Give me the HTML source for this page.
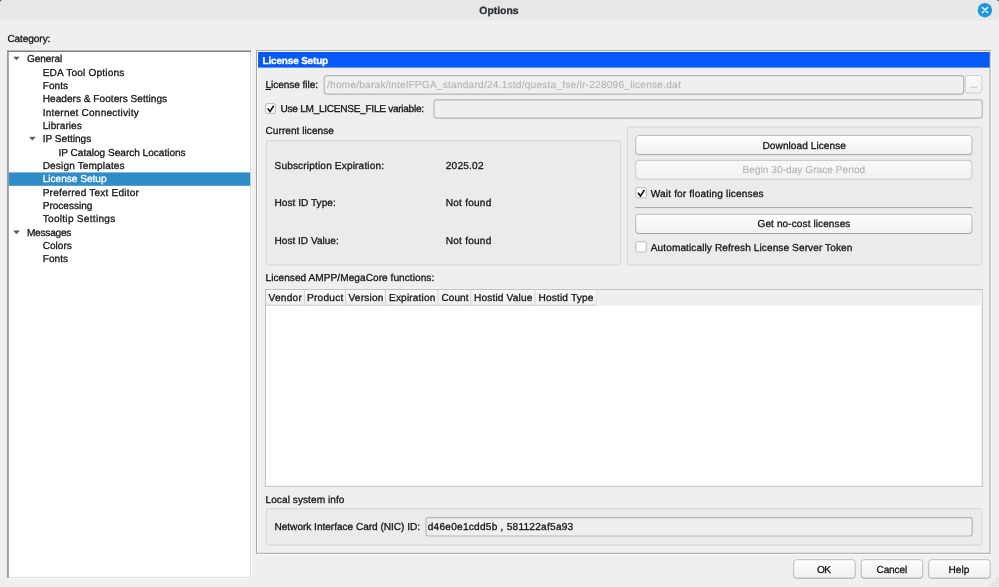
<!DOCTYPE html>
<html><head><meta charset="utf-8"><title>Options</title>
<style>
html,body{margin:0;padding:0}
body{width:999px;height:587px;position:relative;overflow:hidden;background:#efefef;font-family:"Liberation Sans",sans-serif;font-size:10.1px;color:#161616}
#chrome{position:absolute;left:0;top:0;display:block}
#txt{position:absolute;left:0;top:0;width:999px;height:587px;will-change:transform}
.t{position:absolute;white-space:pre;text-rendering:geometricPrecision;-webkit-text-stroke:0.3px;line-height:13px;height:13px;color:#161616}
.t.sel{color:#fff}
.t.hdr{color:#fff}
.t.dis{color:#b2b2b2;-webkit-text-stroke:0.1px}
.t.ttl{color:#2b2f36}
.t u{text-decoration:underline;text-underline-offset:0.6px;text-decoration-thickness:0.7px}
</style></head>
<body>
<svg id="chrome" width="999" height="587" viewBox="0 0 999 587">
<defs><linearGradient id="gb" x1="0" y1="0" x2="0" y2="1"><stop offset="0" stop-color="#fefefe"/><stop offset="1" stop-color="#f0f0f0"/></linearGradient><linearGradient id="gd" x1="0" y1="0" x2="0" y2="1"><stop offset="0" stop-color="#fafafa"/><stop offset="1" stop-color="#f0f0f0"/></linearGradient><linearGradient id="gh" x1="0" y1="0" x2="0" y2="1"><stop offset="0" stop-color="#f8f8f8"/><stop offset="1" stop-color="#eeeeee"/></linearGradient><linearGradient id="gt" x1="0" y1="0" x2="0" y2="1"><stop offset="0" stop-color="#e6e6e6"/><stop offset="1" stop-color="#e9e9e9"/></linearGradient><linearGradient id="sb" x1="0" y1="0" x2="0" y2="1"><stop offset="0" stop-color="#bcbcbc"/><stop offset="0.8" stop-color="#b4b4b4"/><stop offset="1" stop-color="#a2a2a2"/></linearGradient></defs>
<rect x="0.00" y="0.00" width="999.00" height="20.60" rx="0" fill="url(#gt)" />
<path d="M0 0H2.6A2.6 2.6 0 0 0 0 2.6Z" fill="#3a3a3a"/><path d="M999 0H996.4A2.6 2.6 0 0 1 999 2.6Z" fill="#3a3a3a"/>
<circle cx="984.9" cy="10.2" r="7.9" fill="#f6e6da" opacity="0.7"/><circle cx="984.9" cy="10.2" r="7.2" fill="#1f97dc"/><path d="M982.4 7.4 L987.6 12.6 M987.6 7.4 L982.4 12.6" stroke="#fff" stroke-width="1.4" stroke-linecap="round" fill="none"/>
<rect x="7.25" y="50.60" width="243.75" height="527.20" rx="0" fill="#fff" />
<path d="M250.60 50.60L250.60 577.80" stroke="#d2d2d2" stroke-width="0.9" fill="none"/>
<path d="M7.25 577.40L251.00 577.40" stroke="#d2d2d2" stroke-width="0.9" fill="none"/>
<path d="M251.50 51.00L251.50 578.60" stroke="#fafafa" stroke-width="0.9" fill="none"/>
<path d="M7.50 578.30L251.90 578.30" stroke="#fafafa" stroke-width="0.9" fill="none"/>
<path d="M7.95 50.60L7.95 577.80" stroke="#7c7c7c" stroke-width="1.4" fill="none"/>
<path d="M7.25 51.30L251.00 51.30" stroke="#7c7c7c" stroke-width="1.4" fill="none"/>
<rect x="8.65" y="172.40" width="241.55" height="13.40" rx="0" fill="#308cc6" />
<path d="M13.70 56.90H19.30L16.50 60.10Z" fill="#5a5a5a" stroke="#5a5a5a" stroke-width="0.5" stroke-linejoin="round"/>
<path d="M29.60 137.10H35.20L32.40 140.30Z" fill="#5a5a5a" stroke="#5a5a5a" stroke-width="0.5" stroke-linejoin="round"/>
<path d="M13.70 230.80H19.30L16.50 234.00Z" fill="#5a5a5a" stroke="#5a5a5a" stroke-width="0.5" stroke-linejoin="round"/>
<rect x="257.60" y="51.60" width="733.40" height="502.70" rx="0" fill="none" stroke="#ffffff" stroke-width="1.0" />
<rect x="256.50" y="50.60" width="733.50" height="502.70" rx="0" fill="none" stroke="#a6a6a6" stroke-width="1.0" />
<rect x="258.10" y="52.00" width="731.60" height="15.60" rx="0" fill="#0558fa" />
<rect x="324.20" y="75.60" width="639.50" height="18.50" rx="2.5" fill="#efefef" stroke="#b7b7b7" stroke-width="1.2" />
<rect x="965.30" y="75.50" width="16.50" height="17.50" rx="2.5" fill="url(#gd)" stroke="#d0d0d0" stroke-width="1.0" />
<rect x="265.70" y="103.70" width="9.60" height="9.70" rx="1.3" fill="#fff" stroke="#b9b9b9" stroke-width="1.0" />
<rect x="434.00" y="99.90" width="548.30" height="18.20" rx="2.5" fill="#efefef" stroke="#b7b7b7" stroke-width="1.2" />
<rect x="266.40" y="140.60" width="354.30" height="124.30" rx="2" fill="#ebebeb" stroke="#d6d6d6" stroke-width="1.0" />
<rect x="627.30" y="127.10" width="354.60" height="137.80" rx="2" fill="#ebebeb" stroke="#d6d6d6" stroke-width="1.0" />
<rect x="635.70" y="135.50" width="336.20" height="19.20" rx="3" fill="url(#gb)" stroke="url(#sb)" stroke-width="1.0" />
<rect x="635.75" y="160.35" width="336.10" height="18.90" rx="3" fill="url(#gd)" stroke="#cccccc" stroke-width="1.1" />
<rect x="635.90" y="187.70" width="10.40" height="10.20" rx="1.3" fill="#fff" stroke="#b9b9b9" stroke-width="1.0" />
<path d="M635.20 207.60L972.40 207.60" stroke="#a2a2a2" stroke-width="1.0" fill="none"/>
<rect x="635.70" y="214.30" width="336.20" height="19.20" rx="3" fill="url(#gb)" stroke="url(#sb)" stroke-width="1.0" />
<rect x="635.90" y="241.80" width="10.40" height="10.20" rx="1.3" fill="#fff" stroke="#b9b9b9" stroke-width="1.0" />
<path d="M267.65 108.40 L269.95 111.60 L273.65 105.70" stroke="#111" stroke-width="1.60" fill="none" stroke-linejoin="miter"/>
<path d="M638.00 192.71 L640.43 196.10 L644.36 189.85" stroke="#111" stroke-width="1.70" fill="none" stroke-linejoin="miter"/>
<rect x="265.50" y="289.50" width="716.70" height="196.80" rx="0" fill="#fff" stroke="#c2c2c2" stroke-width="1.0" />
<rect x="266.00" y="290.00" width="715.70" height="15.50" rx="0" fill="#efefef" />
<rect x="266.00" y="290.00" width="330.50" height="15.50" rx="0" fill="url(#gh)" />
<path d="M266.00 305.20L596.50 305.20" stroke="#cdcdcd" stroke-width="1.0" fill="none"/>
<path d="M304.30 290.00L304.30 305.50" stroke="#d2d2d2" stroke-width="1.0" fill="none"/>
<path d="M345.50 290.00L345.50 305.50" stroke="#d2d2d2" stroke-width="1.0" fill="none"/>
<path d="M385.40 290.00L385.40 305.50" stroke="#d2d2d2" stroke-width="1.0" fill="none"/>
<path d="M437.90 290.00L437.90 305.50" stroke="#d2d2d2" stroke-width="1.0" fill="none"/>
<path d="M470.70 290.00L470.70 305.50" stroke="#d2d2d2" stroke-width="1.0" fill="none"/>
<path d="M535.00 290.00L535.00 305.50" stroke="#d2d2d2" stroke-width="1.0" fill="none"/>
<path d="M596.30 290.00L596.30 305.50" stroke="#e4e4e4" stroke-width="1.0" fill="none"/>
<rect x="266.40" y="508.60" width="715.50" height="36.60" rx="2" fill="#ebebeb" stroke="#d6d6d6" stroke-width="1.0" />
<rect x="426.00" y="517.60" width="546.20" height="18.40" rx="2.5" fill="#efefef" stroke="#b7b7b7" stroke-width="1.2" />
<rect x="793.70" y="559.70" width="61.50" height="18.50" rx="3" fill="url(#gb)" stroke="url(#sb)" stroke-width="1.0" />
<rect x="861.20" y="559.70" width="61.50" height="18.50" rx="3" fill="url(#gb)" stroke="url(#sb)" stroke-width="1.0" />
<rect x="928.70" y="559.70" width="61.50" height="18.50" rx="3" fill="url(#gb)" stroke="url(#sb)" stroke-width="1.0" />
<rect x="990.00" y="584.95" width="1.1" height="1.1" fill="#c2c2c2"/>
<rect x="992.37" y="582.60" width="1.1" height="1.1" fill="#c2c2c2"/>
<rect x="992.37" y="584.95" width="1.1" height="1.1" fill="#c2c2c2"/>
<rect x="994.74" y="580.25" width="1.1" height="1.1" fill="#c2c2c2"/>
<rect x="994.74" y="582.60" width="1.1" height="1.1" fill="#c2c2c2"/>
<rect x="994.74" y="584.95" width="1.1" height="1.1" fill="#c2c2c2"/>
<rect x="997.11" y="577.90" width="1.1" height="1.1" fill="#c2c2c2"/>
<rect x="997.11" y="580.25" width="1.1" height="1.1" fill="#c2c2c2"/>
<rect x="997.11" y="582.60" width="1.1" height="1.1" fill="#c2c2c2"/>
<rect x="997.11" y="584.95" width="1.1" height="1.1" fill="#c2c2c2"/>
</svg>
<div id="txt">
<div class="t ttl" style="left:479.30px;top:5.00px;letter-spacing:0.007px;font-size:10.4px;font-weight:bold">Options</div>
<div class="t" style="left:7.40px;top:33.00px;letter-spacing:-0.096px">Category:</div>
<div class="t" style="left:26.90px;top:53.00px;letter-spacing:-0.075px">General</div>
<div class="t" style="left:42.70px;top:67.00px;letter-spacing:0.185px">EDA Tool Options</div>
<div class="t" style="left:42.70px;top:80.00px;letter-spacing:0.030px">Fonts</div>
<div class="t" style="left:42.70px;top:93.00px;letter-spacing:0.019px">Headers &amp; Footers Settings</div>
<div class="t" style="left:42.70px;top:107.00px;letter-spacing:0.199px">Internet Connectivity</div>
<div class="t" style="left:42.70px;top:120.00px;letter-spacing:0.053px">Libraries</div>
<div class="t" style="left:42.70px;top:133.00px;letter-spacing:-0.013px">IP Settings</div>
<div class="t" style="left:58.50px;top:147.00px;letter-spacing:-0.024px">IP Catalog Search Locations</div>
<div class="t" style="left:42.70px;top:160.00px;letter-spacing:0.128px">Design Templates</div>
<div class="t sel" style="left:42.70px;top:173.00px;letter-spacing:-0.014px">License Setup</div>
<div class="t" style="left:42.70px;top:187.00px;letter-spacing:0.186px">Preferred Text Editor</div>
<div class="t" style="left:42.70px;top:200.00px;letter-spacing:-0.024px">Processing</div>
<div class="t" style="left:42.70px;top:213.00px;letter-spacing:0.272px">Tooltip Settings</div>
<div class="t" style="left:26.90px;top:227.00px;letter-spacing:-0.214px">Messages</div>
<div class="t" style="left:42.70px;top:240.00px;letter-spacing:-0.012px">Colors</div>
<div class="t" style="left:42.70px;top:253.00px;letter-spacing:0.050px">Fonts</div>
<div class="t hdr" style="left:262.60px;top:55.00px;letter-spacing:-0.186px;font-size:10.0px;font-weight:bold">License Setup</div>
<div class="t" style="left:265.50px;top:79.00px;letter-spacing:-0.062px"><u>L</u>icense file:</div>
<div class="t dis" style="left:327.00px;top:79.00px;letter-spacing:0.236px">/home/barak/intelFPGA_standard/24.1std/questa_fse/lr-228096_license.dat</div>
<div class="t dis" style="left:970.50px;top:79.00px;letter-spacing:-0.641px">...</div>
<div class="t" style="left:280.60px;top:103.00px;letter-spacing:-0.287px">Use LM_LICENSE_FILE variable:</div>
<div class="t" style="left:265.50px;top:125.00px;letter-spacing:0.041px">Current license</div>
<div class="t" style="left:274.50px;top:160.00px;letter-spacing:0.154px">Subscription Expiration:</div>
<div class="t" style="left:445.75px;top:160.00px;letter-spacing:0.214px">2025.02</div>
<div class="t" style="left:274.50px;top:197.00px;letter-spacing:0.022px">Host ID Type:</div>
<div class="t" style="left:445.75px;top:197.00px;letter-spacing:0.219px">Not found</div>
<div class="t" style="left:274.50px;top:235.00px;letter-spacing:-0.006px">Host ID Value:</div>
<div class="t" style="left:445.75px;top:235.00px;letter-spacing:0.219px">Not found</div>
<div class="t" style="left:265.50px;top:272.00px;letter-spacing:0.047px">Licensed AMPP/MegaCore functions:</div>
<div class="t" style="left:762.50px;top:140.00px;letter-spacing:0.062px">Download License</div>
<div class="t dis" style="left:742.50px;top:164.00px;letter-spacing:0.039px">Begin 30-day Grace Period</div>
<div class="t" style="left:650.75px;top:188.00px;letter-spacing:0.153px">Wait for floating licenses</div>
<div class="t" style="left:757.50px;top:218.00px;letter-spacing:0.077px">Get no-cost licenses</div>
<div class="t" style="left:650.75px;top:242.00px;letter-spacing:0.093px">Automatically Refresh License Server Token</div>
<div class="t" style="left:265.50px;top:494.00px;letter-spacing:0.060px">Local system info</div>
<div class="t" style="left:274.50px;top:521.00px;letter-spacing:-0.028px">Network Interface Card (NIC) ID:</div>
<div class="t" style="left:427.70px;top:521.00px;letter-spacing:0.251px">d46e0e1cdd5b , 581122af5a93</div>
<div class="t" style="left:817.00px;top:564.00px;letter-spacing:-0.547px">OK</div>
<div class="t" style="left:876.50px;top:564.00px;letter-spacing:-0.154px">Cancel</div>
<div class="t" style="left:948.50px;top:564.00px;letter-spacing:0.059px">Help</div>
<div class="t" style="left:268.50px;top:292.00px;letter-spacing:0.250px">Vendor</div>
<div class="t" style="left:307.00px;top:292.00px;letter-spacing:0.243px">Product</div>
<div class="t" style="left:348.50px;top:292.00px;letter-spacing:0.190px">Version</div>
<div class="t" style="left:389.00px;top:292.00px;letter-spacing:0.161px">Expiration</div>
<div class="t" style="left:441.50px;top:292.00px;letter-spacing:0.013px">Count</div>
<div class="t" style="left:474.00px;top:292.00px;letter-spacing:0.168px">Hostid Value</div>
<div class="t" style="left:538.50px;top:292.00px;letter-spacing:0.170px">Hostid Type</div>
</div>
</body></html>
